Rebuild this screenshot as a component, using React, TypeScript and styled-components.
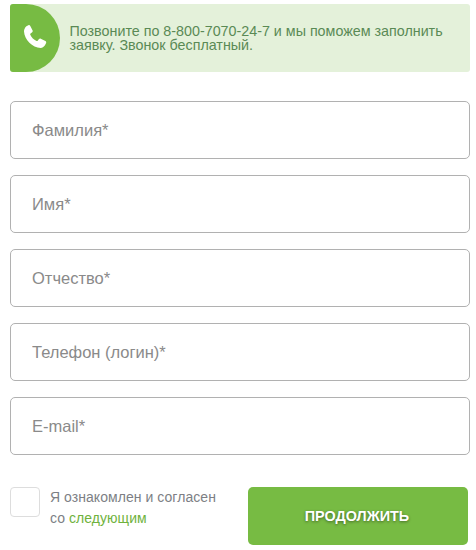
import styled, { createGlobalStyle } from "styled-components";

const GlobalStyle = createGlobalStyle`
  html, body {
    margin: 0;
    padding: 0;
    background: #ffffff;
  }
  * {
    box-sizing: border-box;
  }
`;

const Page = styled.form`
  width: 476px;
  height: 550px;
  padding: 4px 6px 0 10px;
  font-family: "Liberation Sans", Arial, sans-serif;
  overflow: hidden;
`;

const Notice = styled.div`
  display: flex;
  align-items: center;
  height: 68px;
  background: #e4f1da;
  border-radius: 3px;
`;

const PhoneBadge = styled.div`
  flex: none;
  display: flex;
  align-items: center;
  justify-content: center;
  width: 50px;
  height: 68px;
  padding: 0 1px 2px 0;
  background: #77bb43;
  border-radius: 3px 34px 34px 3px;
`;

const NoticeText = styled.p`
  margin: 0 0 0 9.5px;
  width: 400px;
  font-size: 14.3px;
  line-height: 14px;
  color: #5a8a55;
`;

const Fields = styled.div`
  display: flex;
  flex-direction: column;
  gap: 16px;
  margin-top: 29px;
`;

const Field = styled.input`
  display: block;
  width: 100%;
  height: 58px;
  padding: 1px 21px 0;
  font-family: inherit;
  font-size: 16.5px;
  color: #333333;
  background: #ffffff;
  border: 1px solid #b1b1b1;
  border-radius: 5px;
  outline: none;

  &::placeholder {
    color: #8a8a8a;
    opacity: 1;
  }
`;

const Footer = styled.div`
  display: flex;
  align-items: flex-start;
  margin-top: 32px;
`;

const Check = styled.input`
  appearance: none;
  flex: none;
  width: 30px;
  height: 30px;
  margin: 0;
  background: #ffffff;
  border: 1px solid #dddddd;
  border-radius: 4px;
`;

const Agreement = styled.label`
  flex: none;
  width: 198px;
  margin-left: 10px;
  font-size: 14px;
  line-height: 21px;
  letter-spacing: 0.05px;
  color: #7d7f85;
`;

const AgreementLink = styled.a`
  color: #6fb23c;
  text-decoration: none;
`;

const Submit = styled.button`
  flex: none;
  width: 220px;
  height: 58px;
  padding: 0 2px 0 0;
  font-family: inherit;
  font-size: 14.4px;
  font-weight: 700;
  color: #ffffff;
  text-shadow: 0 1px 3px rgba(0, 0, 0, 0.45);
  background: #77bb43;
  border: none;
  border-radius: 5px;
`;

const PhoneIcon = () => (
  <svg width="24" height="24" viewBox="0 0 24 24" aria-hidden="true">
    <path
      fill="#ffffff"
      d="M3.400 1.200L5.400.2c.8-.3 1.500 0 1.900.7L9.600 5.400c.3.7.2 1.300-.4 1.800L7.600 8.600c-.4.3-.5.7-.3 1.200 1.300 2.800 3.400 4.900 6.200 6.200.5.200.9.100 1.200-.3l1.300-1.600c.5-.6 1.100-.7 1.800-.4l4.600 2.300c.7.4 1 1.100.7 1.900l-1 2C21.300 21.200 19.500 23 17.600 23 9.500 22.600 1.400 14.500 1 6.400 1 4.500 1.900 2.500 3.400 1.200z"
    />
  </svg>
);

export default function App() {
  return (
    <Page>
      <GlobalStyle />
      <Notice>
        <PhoneBadge>
          <PhoneIcon />
        </PhoneBadge>
        <NoticeText>
          Позвоните по 8-800-7070-24-7 и мы поможем заполнить заявку. Звонок
          бесплатный.
        </NoticeText>
      </Notice>
      <Fields>
        <Field placeholder="Фамилия*" />
        <Field placeholder="Имя*" />
        <Field placeholder="Отчество*" />
        <Field placeholder="Телефон (логин)*" />
        <Field placeholder="E-mail*" />
      </Fields>
      <Footer>
        <Check type="checkbox" id="agree" />
        <Agreement htmlFor="agree">
          Я ознакомлен и согласен
          <br />
          со <AgreementLink href="#">следующим</AgreementLink>
        </Agreement>
        <Submit type="button">ПРОДОЛЖИТЬ</Submit>
      </Footer>
    </Page>
  );
}
